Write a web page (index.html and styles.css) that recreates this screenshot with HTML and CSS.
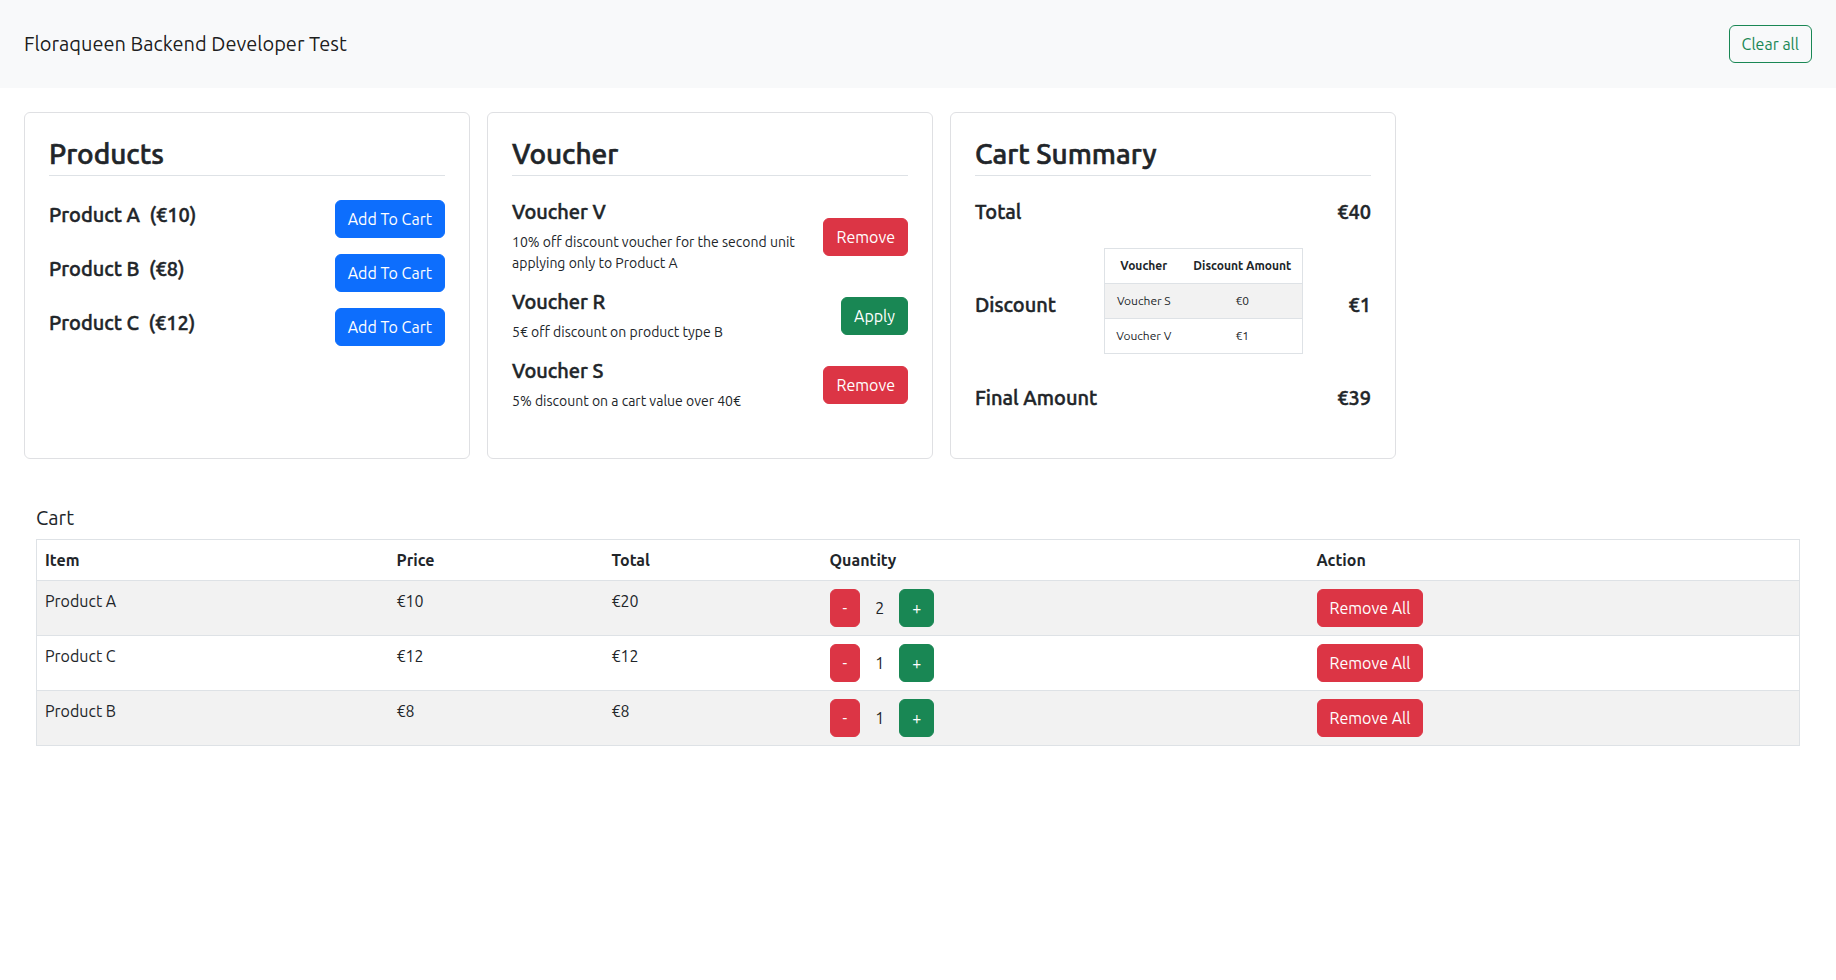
FILE: index.html
```html
<!DOCTYPE html>
<html lang="en">
<head>
<meta charset="utf-8">
<title>Floraqueen Backend Developer Test</title>
<link rel="stylesheet" href="styles.css">
</head>
<body>
<nav class="navbar">
  <span class="brand">Floraqueen Backend Developer Test</span>
  <button class="btn btn-outline-success">Clear all</button>
</nav>

<main class="main">
  <div class="cards">
    <section class="card">
      <h3 class="card-title">Products</h3>
      <div class="item-row">
        <h5 class="h5">Product A&nbsp; (€10)</h5>
        <button class="btn btn-primary">Add To Cart</button>
      </div>
      <div class="item-row">
        <h5 class="h5">Product B&nbsp; (€8)</h5>
        <button class="btn btn-primary">Add To Cart</button>
      </div>
      <div class="item-row">
        <h5 class="h5">Product C&nbsp; (€12)</h5>
        <button class="btn btn-primary">Add To Cart</button>
      </div>
    </section>

    <section class="card">
      <h3 class="card-title">Voucher</h3>
      <div class="voucher-row">
        <div class="voucher-info">
          <h5 class="h5">Voucher V</h5>
          <p class="voucher-desc">10% off discount voucher for the second unit applying only to Product A</p>
        </div>
        <button class="btn btn-danger">Remove</button>
      </div>
      <div class="voucher-row">
        <div class="voucher-info">
          <h5 class="h5">Voucher R</h5>
          <p class="voucher-desc">5€ off discount on product type B</p>
        </div>
        <button class="btn btn-success">Apply</button>
      </div>
      <div class="voucher-row">
        <div class="voucher-info">
          <h5 class="h5">Voucher S</h5>
          <p class="voucher-desc">5% discount on a cart value over 40€</p>
        </div>
        <button class="btn btn-danger">Remove</button>
      </div>
    </section>

    <section class="card">
      <h3 class="card-title">Cart Summary</h3>
      <div class="sum-row">
        <h5 class="h5">Total</h5>
        <h5 class="h5">€40</h5>
      </div>
      <div class="sum-row discount-row">
        <h5 class="h5">Discount</h5>
        <table class="disc-table">
          <colgroup><col class="dc-1"><col class="dc-2"></colgroup>
          <thead>
            <tr><th>Voucher</th><th>Discount Amount</th></tr>
          </thead>
          <tbody>
            <tr><td>Voucher S</td><td>€0</td></tr>
            <tr><td>Voucher V</td><td>€1</td></tr>
          </tbody>
        </table>
        <h5 class="h5 value">€1</h5>
      </div>
      <div class="sum-row">
        <h5 class="h5">Final Amount</h5>
        <h5 class="h5">€39</h5>
      </div>
    </section>
  </div>

  <section class="cart">
    <h5 class="cart-title">Cart</h5>
    <table class="cart-table">
      <colgroup>
        <col class="c-item"><col class="c-price"><col class="c-total"><col class="c-qty"><col class="c-action">
      </colgroup>
      <thead>
        <tr><th>Item</th><th>Price</th><th>Total</th><th>Quantity</th><th>Action</th></tr>
      </thead>
      <tbody>
        <tr>
          <td>Product A</td><td>€10</td><td>€20</td>
          <td><div class="qty"><button class="btn btn-danger">-</button><span class="qty-num">2</span><button class="btn btn-success">+</button></div></td>
          <td><button class="btn btn-danger">Remove All</button></td>
        </tr>
        <tr>
          <td>Product C</td><td>€12</td><td>€12</td>
          <td><div class="qty"><button class="btn btn-danger">-</button><span class="qty-num">1</span><button class="btn btn-success">+</button></div></td>
          <td><button class="btn btn-danger">Remove All</button></td>
        </tr>
        <tr>
          <td>Product B</td><td>€8</td><td>€8</td>
          <td><div class="qty"><button class="btn btn-danger">-</button><span class="qty-num">1</span><button class="btn btn-success">+</button></div></td>
          <td><button class="btn btn-danger">Remove All</button></td>
        </tr>
      </tbody>
    </table>
  </section>
</main>
</body>
</html>
```

FILE: styles.css
```css
* { box-sizing: border-box; }

body {
  margin: 0;
  font-family: Ubuntu, Roboto, "Liberation Sans", sans-serif;
  font-size: 16px;
  line-height: 1.5;
  color: #212529;
  background: #fff;
}

.navbar {
  height: 88px;
  background: #f8f9fa;
  display: flex;
  align-items: center;
  justify-content: space-between;
  padding: 0 24px 0 24px;
}

.brand {
  font-size: 20px;
  line-height: 30px;
  color: rgba(0, 0, 0, 0.9);
}

.btn {
  display: inline-block;
  font-family: inherit;
  font-size: 16px;
  font-weight: 400;
  line-height: 24px;
  padding: 6px 12px;
  border: 1px solid transparent;
  border-radius: 6px;
  color: #fff;
  background: transparent;
  cursor: pointer;
  white-space: nowrap;
}
.btn-primary { background: #0d6efd; border-color: #0d6efd; }
.btn-danger { background: #dc3545; border-color: #dc3545; }
.btn-success { background: #198754; border-color: #198754; }
.btn-outline-success { color: #198754; border-color: #198754; background: transparent; }

.main { padding-top: 24px; }

.cards {
  display: flex;
  gap: 17px;
  padding: 0 24px;
  align-items: stretch;
}

.card {
  width: 446px;
  border: 1px solid #dfe0e3;
  border-radius: 6px;
  padding: 24px;
  background: #fff;
}

.card-title {
  font-size: 28px;
  font-weight: 500;
  line-height: 1.2;
  margin: 0 0 24px 0;
  padding-bottom: 4px;
  border-bottom: 1px solid #dee2e6;
  -webkit-text-stroke: 0.6px currentColor;
}

.h5 {
  font-size: 20px;
  font-weight: 500;
  line-height: 1.2;
  margin: 0 0 8px 0;
  -webkit-text-stroke: 0.45px currentColor;
}

.item-row {
  display: flex;
  justify-content: space-between;
  align-items: center;
  margin-bottom: 16px;
}

.voucher-row {
  display: flex;
  align-items: center;
  gap: 16px;
  margin-bottom: 16px;
}
.voucher-info { flex: 1; }
.voucher-desc {
  margin: 0;
  font-size: 14px;
  line-height: 21px;
}

.sum-row {
  display: flex;
  justify-content: space-between;
  align-items: center;
  margin-bottom: 16px;
}

.discount-row {
  display: grid;
  grid-template-columns: 129px 198px 1fr;
  align-items: center;
}
.discount-row .value { text-align: right; }

.disc-table {
  width: 198px;
  border-collapse: collapse;
  border: 1px solid #dee2e6;
  font-size: 12px;
  line-height: 18px;
  margin-bottom: 16px;
  text-align: center;
  table-layout: fixed;
}
.dc-1 { width: 78px; }
.dc-2 { width: 120px; }
.disc-table th,
.disc-table td {
  padding: 8px 4px;
  border-bottom: 1px solid #dee2e6;
}
.disc-table th { font-weight: 700; }
.disc-table tbody tr:nth-child(odd) td { background: #f2f2f2; }

.cart {
  margin-top: 47px;
  padding: 0 36px;
}
.cart-title {
  font-size: 20px;
  font-weight: 400;
  line-height: 1.2;
  margin: 0 0 9px 0;
}

.cart-table {
  width: 100%;
  border-collapse: collapse;
  border: 1px solid #dee2e6;
  table-layout: fixed;
}
.c-item { width: 352px; }
.c-price { width: 215px; }
.c-total { width: 218px; }
.c-qty { width: 487px; }

.cart-table th,
.cart-table td {
  padding: 8px;
  text-align: left;
  vertical-align: top;
  border-bottom: 1px solid #dee2e6;
}
.cart-table th { font-weight: 700; }
.cart-table tbody tr:nth-child(odd) td { background: #f2f2f2; }

.qty {
  display: flex;
  align-items: center;
}
.qty-num {
  margin: 0 15px;
}
```
